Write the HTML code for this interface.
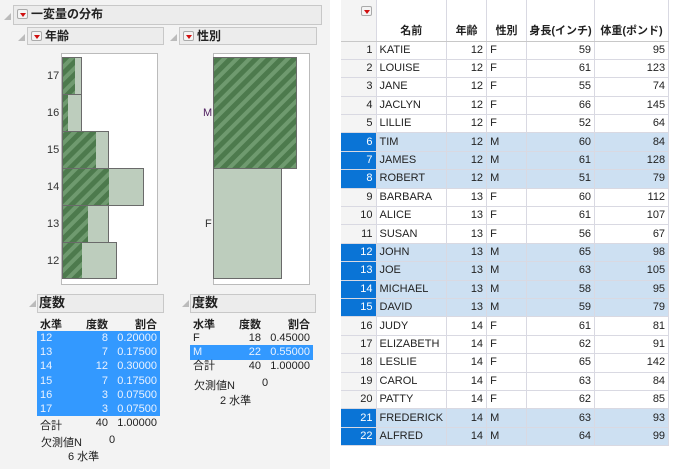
<!DOCTYPE html>
<html><head><meta charset="utf-8"><style>
*{margin:0;padding:0;box-sizing:border-box}
body{width:674px;height:469px;background:#fff;font-family:"Liberation Sans","Noto Sans CJK JP",sans-serif;font-size:11px;color:#222;position:relative;overflow:hidden}
.a{position:absolute;white-space:nowrap}
.hdr{position:absolute;background:#ececec;border:1px solid #c8c8c8;font-weight:bold;font-size:12px;line-height:16px}
.tri{position:absolute;width:0;height:0;border-left:7px solid transparent;border-bottom:7px solid #bbb}
.btn{display:inline-block;width:11px;height:10px;border:1px solid #aaa;background:#f4f4f4;border-radius:2px;position:relative;vertical-align:-1px;margin:0 3px 0 3px}
.btn:after{content:"";position:absolute;left:2px;top:3px;border-left:3px solid transparent;border-right:3px solid transparent;border-top:4px solid #d01010}
.r{text-align:right}
table{border-collapse:collapse;position:absolute;left:341px;top:0;font-size:11px}
td{border-right:1px solid #d9d9e2;border-bottom:1px solid #d9d9e2;height:18.4px;padding:0 3px;line-height:17px}
td.n{text-align:right;background:#f4f4f4;width:35px}
.s td{background:#cde0f2}
.s td.n{background:#0a74d6;color:#fff}
th{font-weight:bold;height:41px;vertical-align:bottom;padding-bottom:3px;border-right:1px solid #d9d9e2;border-bottom:1px solid #c8c8c8;font-size:11px}
</style></head><body>
<div class="a" style="left:0;top:0;width:330px;height:469px;background:#f3f3f3"></div>
<div class="tri" style="left:4px;top:13px"></div>
<div class="hdr" style="left:13px;top:5px;width:309px;height:20px"><span class="btn"></span>一変量の分布</div>
<div class="tri" style="left:18px;top:34px"></div>
<div class="hdr" style="left:27px;top:27px;width:137px;height:18px"><span class="btn"></span>年齢</div>
<div class="tri" style="left:170px;top:34px"></div>
<div class="hdr" style="left:179px;top:27px;width:138px;height:18px"><span class="btn"></span>性別</div>

<svg class="a" style="left:0;top:0" width="330" height="290">
<defs><pattern id="h" patternUnits="userSpaceOnUse" width="9" height="9" patternTransform="rotate(45)">
<rect width="9" height="9" fill="#4d7a4d"/><rect width="4" height="9" fill="#6f9a6f"/></pattern></defs>
<rect x="61.5" y="53.5" width="96" height="231" fill="#fff" stroke="#bbb"/>
<rect x="213.5" y="53.5" width="96" height="231" fill="#fff" stroke="#bbb"/>
<g fill="#bdcdbd">
<rect x="62" y="57" width="20" height="37"/><rect x="62" y="94" width="20" height="37"/><rect x="62" y="131" width="47" height="37"/>
<rect x="62" y="168" width="82" height="37"/><rect x="62" y="205" width="47" height="37"/><rect x="62" y="242" width="55" height="37"/>
<rect x="214" y="168" width="68" height="111"/>
</g>
<g fill="url(#h)">
<rect x="62" y="57" width="13" height="37"/><rect x="62" y="94" width="6" height="37"/><rect x="62" y="131" width="34" height="37"/>
<rect x="62" y="168" width="47" height="37"/><rect x="62" y="205" width="26" height="37"/><rect x="62" y="242" width="20" height="37"/>
<rect x="214" y="57" width="83" height="111"/>
</g>
<g fill="none" stroke="#6a6a6a" stroke-width="1">
<rect x="62.5" y="57.5" width="19" height="37"/><rect x="62.5" y="94.5" width="19" height="37"/><rect x="62.5" y="131.5" width="46" height="37"/>
<rect x="62.5" y="168.5" width="81" height="37"/><rect x="62.5" y="205.5" width="46" height="37"/><rect x="62.5" y="242.5" width="54" height="36"/>
<rect x="213.5" y="57.5" width="83" height="111"/><rect x="213.5" y="168.5" width="68" height="110"/>
</g>
<g font-size="11" fill="#333" font-family="Liberation Sans,sans-serif">
<text x="47" y="79">17</text><text x="47" y="116">16</text><text x="47" y="153">15</text><text x="47" y="190">14</text><text x="47" y="227">13</text><text x="47" y="264">12</text>
<text x="203" y="116" fill="#502060">M</text><text x="205" y="227">F</text></g>
</svg>

<div class="tri" style="left:29px;top:300px"></div>
<div class="hdr" style="left:37px;top:294px;width:127px;height:19px;font-size:13px;padding-left:1px">度数</div>
<div class="a" style="left:37px;top:331px;width:123px;height:85px;background:#3399ff"></div>
<div class="a" style="left:40px;top:316px;font-weight:bold">水準</div>
<div class="a r" style="left:80px;top:316px;width:28px;font-weight:bold">度数</div>
<div class="a r" style="left:110px;top:316px;width:47px;font-weight:bold">割合</div>
<div class="a" style="left:40px;top:331px;line-height:14.2px;color:#eaf2ff">12<br>13<br>14<br>15<br>16<br>17</div>
<div class="a r" style="left:80px;top:331px;width:28px;line-height:14.2px;color:#eaf2ff">8<br>7<br>12<br>7<br>3<br>3</div>
<div class="a r" style="left:110px;top:331px;width:47px;line-height:14.2px;color:#eaf2ff">0.20000<br>0.17500<br>0.30000<br>0.17500<br>0.07500<br>0.07500</div>
<div class="a" style="left:40px;top:417px">合計</div><div class="a r" style="left:80px;top:417px;width:28px">40</div><div class="a r" style="left:110px;top:417px;width:47px">1.00000</div>
<div class="a" style="left:41px;top:434px">欠測値N</div><div class="a" style="left:109px;top:434px">0</div>
<div class="a" style="left:68px;top:448px">6 水準</div>

<div class="tri" style="left:182px;top:300px"></div>
<div class="hdr" style="left:190px;top:294px;width:126px;height:19px;font-size:13px;padding-left:1px">度数</div>
<div class="a" style="left:190px;top:345px;width:123px;height:15px;background:#3399ff"></div>
<div class="a" style="left:193px;top:316px;font-weight:bold">水準</div>
<div class="a r" style="left:233px;top:316px;width:28px;font-weight:bold">度数</div>
<div class="a r" style="left:263px;top:316px;width:47px;font-weight:bold">割合</div>
<div class="a" style="left:193px;top:331px;line-height:14.2px">F<br><span style="color:#eaf2ff">M</span><br>合計</div>
<div class="a r" style="left:233px;top:331px;width:28px;line-height:14.2px">18<br><span style="color:#eaf2ff">22</span><br>40</div>
<div class="a r" style="left:263px;top:331px;width:47px;line-height:14.2px">0.45000<br><span style="color:#eaf2ff">0.55000</span><br>1.00000</div>
<div class="a" style="left:194px;top:377px">欠測値N</div><div class="a" style="left:262px;top:377px">0</div>
<div class="a" style="left:220px;top:392px">2 水準</div>

<table>
<tr><th style="width:35px;background:#f4f4f4;position:relative"><span class="btn" style="position:absolute;left:20px;top:6px;margin:0"></span></th><th style="width:70px">名前</th><th style="width:40px">年齢</th><th style="width:40px">性別</th><th style="width:68px">身長(インチ)</th><th style="width:74px">体重(ポンド)</th></tr>
<tr><td class="n">1</td><td>KATIE</td><td class="r">12</td><td>F</td><td class="r">59</td><td class="r">95</td></tr>
<tr><td class="n">2</td><td>LOUISE</td><td class="r">12</td><td>F</td><td class="r">61</td><td class="r">123</td></tr>
<tr><td class="n">3</td><td>JANE</td><td class="r">12</td><td>F</td><td class="r">55</td><td class="r">74</td></tr>
<tr><td class="n">4</td><td>JACLYN</td><td class="r">12</td><td>F</td><td class="r">66</td><td class="r">145</td></tr>
<tr><td class="n">5</td><td>LILLIE</td><td class="r">12</td><td>F</td><td class="r">52</td><td class="r">64</td></tr>
<tr class="s"><td class="n">6</td><td>TIM</td><td class="r">12</td><td>M</td><td class="r">60</td><td class="r">84</td></tr>
<tr class="s"><td class="n">7</td><td>JAMES</td><td class="r">12</td><td>M</td><td class="r">61</td><td class="r">128</td></tr>
<tr class="s"><td class="n">8</td><td>ROBERT</td><td class="r">12</td><td>M</td><td class="r">51</td><td class="r">79</td></tr>
<tr><td class="n">9</td><td>BARBARA</td><td class="r">13</td><td>F</td><td class="r">60</td><td class="r">112</td></tr>
<tr><td class="n">10</td><td>ALICE</td><td class="r">13</td><td>F</td><td class="r">61</td><td class="r">107</td></tr>
<tr><td class="n">11</td><td>SUSAN</td><td class="r">13</td><td>F</td><td class="r">56</td><td class="r">67</td></tr>
<tr class="s"><td class="n">12</td><td>JOHN</td><td class="r">13</td><td>M</td><td class="r">65</td><td class="r">98</td></tr>
<tr class="s"><td class="n">13</td><td>JOE</td><td class="r">13</td><td>M</td><td class="r">63</td><td class="r">105</td></tr>
<tr class="s"><td class="n">14</td><td>MICHAEL</td><td class="r">13</td><td>M</td><td class="r">58</td><td class="r">95</td></tr>
<tr class="s"><td class="n">15</td><td>DAVID</td><td class="r">13</td><td>M</td><td class="r">59</td><td class="r">79</td></tr>
<tr><td class="n">16</td><td>JUDY</td><td class="r">14</td><td>F</td><td class="r">61</td><td class="r">81</td></tr>
<tr><td class="n">17</td><td>ELIZABETH</td><td class="r">14</td><td>F</td><td class="r">62</td><td class="r">91</td></tr>
<tr><td class="n">18</td><td>LESLIE</td><td class="r">14</td><td>F</td><td class="r">65</td><td class="r">142</td></tr>
<tr><td class="n">19</td><td>CAROL</td><td class="r">14</td><td>F</td><td class="r">63</td><td class="r">84</td></tr>
<tr><td class="n">20</td><td>PATTY</td><td class="r">14</td><td>F</td><td class="r">62</td><td class="r">85</td></tr>
<tr class="s"><td class="n">21</td><td>FREDERICK</td><td class="r">14</td><td>M</td><td class="r">63</td><td class="r">93</td></tr>
<tr class="s"><td class="n">22</td><td>ALFRED</td><td class="r">14</td><td>M</td><td class="r">64</td><td class="r">99</td></tr>
</table>
</body></html>
